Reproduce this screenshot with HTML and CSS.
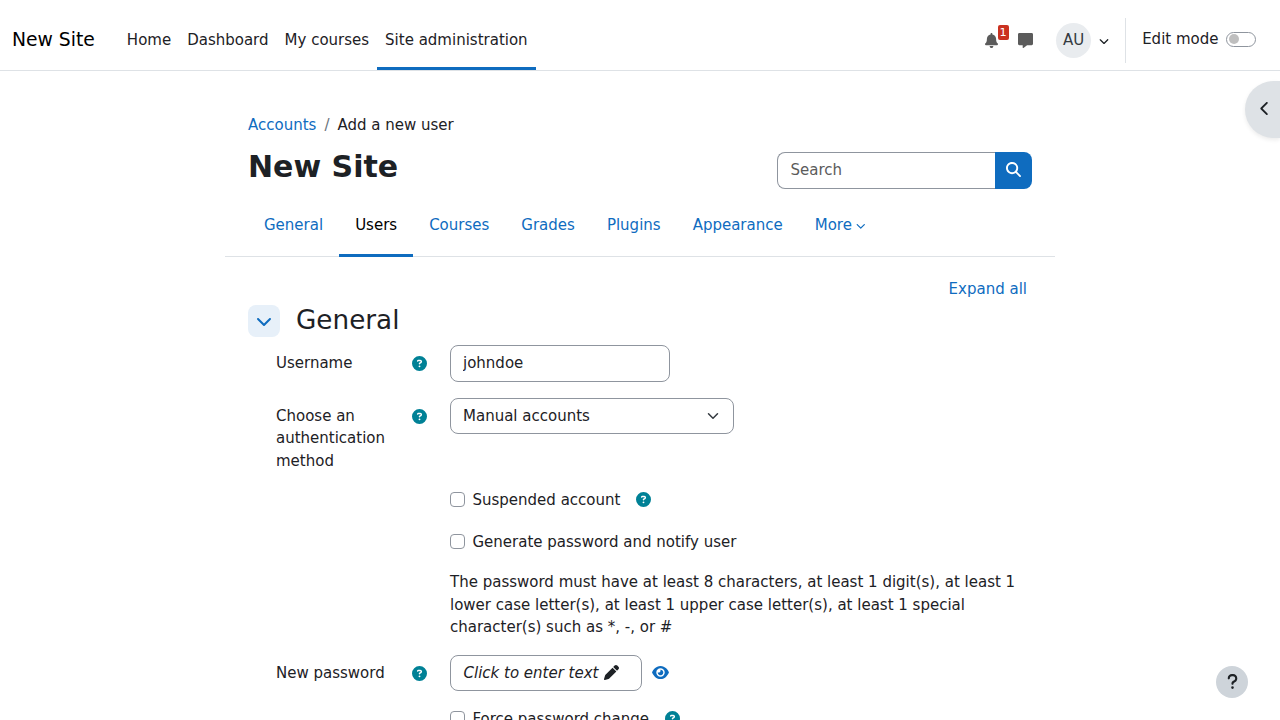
FILE: index.html
```html
<!DOCTYPE html>
<html lang="en">
<head>
<meta charset="utf-8">
<title>Add a new user</title>
<link rel="stylesheet" href="styles.css">
</head>
<body>
<svg class="sprite" aria-hidden="true">
  <symbol id="down" viewBox="0 0 512 512"><path d="M233.4 406.6c12.5 12.5 32.8 12.5 45.3 0l192-192c12.5-12.5 12.5-32.8 0-45.3s-32.8-12.5-45.3 0L256 338.7 86.6 169.4c-12.5-12.5-32.8-12.5-45.3 0s-12.5 32.8 0 45.3l192 192z"/></symbol>
  <symbol id="left" viewBox="0 0 320 512"><path d="M9.4 233.4c-12.5 12.5-12.5 32.8 0 45.3l192 192c12.5 12.5 32.8 12.5 45.3 0s12.5-32.8 0-45.3L77.3 256 246.6 86.6c12.5-12.5 12.5-32.8 0-45.3s-32.8-12.5-45.3 0l-192 192z"/></symbol>
  <symbol id="bell" viewBox="0 0 448 512"><path d="M224 0c-17.7 0-32 14.3-32 32V51.2C119 66 64 130.6 64 208v18.8c0 47-17.3 92.4-48.5 127.6l-7.4 8.3c-8.4 9.4-10.4 22.9-5.3 34.4S19.4 416 32 416H416c12.6 0 24-7.4 29.2-18.9s3.1-25-5.3-34.4l-7.4-8.3C401.3 319.2 384 273.9 384 226.8V208c0-77.4-55-142-128-156.8V32c0-17.7-14.3-32-32-32zm45.3 493.3c12-12 18.7-28.3 18.7-45.3H224 160c0 17 6.7 33.3 18.7 45.3s28.3 18.7 45.3 18.7s33.3-6.7 45.3-18.7z"/></symbol>
  <symbol id="message" viewBox="0 0 512 512"><path d="M48 0C20 0 0 20 0 48V368c0 28 20 48 48 48h112v80c0 6.1 3.4 11.6 8.8 14.3s11.9 2.1 16.8-1.5L309.3 416H464c28 0 48-20 48-48V48c0-28-20-48-48-48H48z"/></symbol>
  <symbol id="search" viewBox="0 0 512 512"><path d="M416 208c0 45.9-14.9 88.3-40 122.7L502.6 457.4c12.5 12.5 12.5 32.8 0 45.3s-32.8 12.5-45.3 0L330.7 376c-34.4 25.2-76.8 40-122.7 40C93.1 416 0 322.9 0 208S93.1 0 208 0S416 93.1 416 208zM208 352a144 144 0 1 0 0-288 144 144 0 1 0 0 288z"/></symbol>
  <symbol id="help" viewBox="0 0 512 512"><path d="M256 512A256 256 0 1 0 256 0a256 256 0 1 0 0 512zM169.8 165.3c7.9-22.3 29.1-37.3 52.8-37.3h58.3c34.9 0 63.1 28.3 63.1 63.1c0 22.6-12.1 43.5-31.7 54.8L280 264.4c-.2 13-10.9 23.6-24 23.6c-13.3 0-24-10.7-24-24V250.5c0-8.6 4.6-16.5 12.1-20.8l44.3-25.4c4.7-2.7 7.6-7.7 7.6-13.1c0-8.4-6.8-15.1-15.1-15.1H222.6c-3.4 0-6.4 2.1-7.5 5.3l-.4 1.2c-4.4 12.5-18.2 19-30.6 14.6s-19-18.2-14.6-30.6l.4-1.2zM224 352a32 32 0 1 1 64 0 32 32 0 1 1 -64 0z"/></symbol>
  <symbol id="pen" viewBox="0 0 512 512"><path d="M362.7 19.3L314.3 67.7 444.3 197.7l48.4-48.4c25-25 25-65.5 0-90.5L453.3 19.3c-25-25-65.5-25-90.5 0zm-71 71L58.6 323.5c-10.4 10.4-18 23.3-22.2 37.4L1 481.2C-1.5 489.7 .8 498.8 7 505s15.3 8.5 23.7 6.1l120.3-35.4c14.1-4.2 27-11.8 37.4-22.2L421.7 220.3 291.7 90.3z"/></symbol>
  <symbol id="eye" viewBox="0 0 576 512"><path d="M288 32c-80.8 0-145.5 36.8-192.6 80.6C48.6 156 17.3 208 2.5 243.7c-3.3 7.9-3.3 16.7 0 24.6C17.3 304 48.6 356 95.4 399.4C142.5 443.2 207.2 480 288 480s145.5-36.8 192.6-80.6c46.8-43.5 78.1-95.4 93-131.1c3.3-7.9 3.3-16.7 0-24.6c-14.9-35.7-46.2-87.7-93-131.1C433.5 68.8 368.8 32 288 32zM144 256a144 144 0 1 1 288 0 144 144 0 1 1 -288 0zm144-64c0 35.3-28.7 64-64 64c-7.1 0-13.9-1.2-20.3-3.3c-5.5-1.8-11.9 1.6-11.7 7.4c.3 6.9 1.3 13.8 3.2 20.7c13.7 51.2 66.4 81.6 117.6 67.9s81.6-66.4 67.9-117.6c-11.1-41.5-47.8-69.4-88.6-71.1c-5.8-.2-9.2 6.1-7.4 11.7c2.1 6.4 3.3 13.2 3.3 20.3z"/></symbol>
  <symbol id="question" viewBox="0 0 320 512"><path d="M80 160c0-35.3 28.7-64 64-64h32c35.3 0 64 28.7 64 64v3.6c0 21.8-11.1 42.1-29.4 53.8l-42.2 27.1c-25.2 16.2-40.4 44.1-40.4 74V320c0 17.7 14.3 32 32 32s32-14.3 32-32v-1.4c0-8.2 4.2-15.8 11-20.2l42.2-27.1c36.6-23.6 58.8-64.1 58.8-107.7V160c0-70.7-57.3-128-128-128H144C73.3 32 16 89.3 16 160c0 17.7 14.3 32 32 32s32-14.3 32-32zm80 320a40 40 0 1 0 0-80 40 40 0 1 0 0 80z"/></symbol>
</svg>

<header class="navbar">
  <a class="brand">New Site</a>
  <nav class="primary">
    <a>Home</a><a>Dashboard</a><a>My courses</a><a class="active">Site administration</a>
  </nav>
  <div class="tools">
    <span class="notify"><svg class="bell"><use href="#bell"/></svg><span class="badge">1</span></span>
    <svg class="message"><use href="#message"/></svg>
    <span class="avatar">AU</span>
    <svg class="caret"><use href="#down"/></svg>
    <div class="edit"><span>Edit mode</span><span class="switch"></span></div>
  </div>
</header>

<button class="drawer"><svg><use href="#left"/></svg></button>

<main class="page">
  <nav class="crumbs"><a>Accounts</a><span class="slash">/</span><span>Add a new user</span></nav>
  <div class="heading">
    <h1>New Site</h1>
    <form class="search"><input type="text" placeholder="Search"><button type="button"><svg><use href="#search"/></svg></button></form>
  </div>
  <nav class="tabs">
    <a>General</a><a class="active">Users</a><a>Courses</a><a>Grades</a><a>Plugins</a><a>Appearance</a><a>More<svg><use href="#down"/></svg></a>
  </nav>
  <div class="expand"><a>Expand all</a></div>
  <section>
    <div class="section-title"><span class="toggle"><svg><use href="#down"/></svg></span><h3>General</h3></div>
    <div class="row username">
      <label>Username</label><svg class="help"><use href="#help"/></svg>
      <input class="text" type="text" value="johndoe">
    </div>
    <div class="row auth">
      <label>Choose an authentication method</label><svg class="help"><use href="#help"/></svg>
      <div class="select"><span>Manual accounts</span><svg viewBox="0 0 16 16"><path d="m2 5 6 6 6-6"/></svg></div>
    </div>
    <div class="check suspended"><span class="box"></span><span class="name">Suspended account</span><svg class="help"><use href="#help"/></svg></div>
    <div class="check generate"><span class="box"></span><span class="name">Generate password and notify user</span></div>
    <p class="policy">The password must have at least 8 characters, at least 1 digit(s), at least 1 lower case letter(s), at least 1 upper case letter(s), at least 1 special character(s) such as *, -, or #</p>
    <div class="row password">
      <label>New password</label><svg class="help"><use href="#help"/></svg>
      <div class="reveal"><span class="enter"><em>Click to enter text</em><svg><use href="#pen"/></svg></span><svg class="eye"><use href="#eye"/></svg></div>
    </div>
    <div class="check force"><span class="box"></span><span class="name">Force password change</span><svg class="help"><use href="#help"/></svg></div>
  </section>
</main>

<button class="footer-help"><svg><use href="#question"/></svg></button>
</body>
</html>
```
FILE: styles.css
```css
* { box-sizing: border-box; }
html, body { height: 100%; overflow: hidden; }
body { margin: 0; background: #fff; color: #1d2125; font: 15px/22.5px "DejaVu Sans", sans-serif; }
svg { display: block; fill: currentColor; flex: none; }
.sprite { position: absolute; width: 0; height: 0; }
a { color: #0f6cbf; }
button { border: 0; padding: 0; display: flex; align-items: center; justify-content: center; }
input { font: inherit; color: inherit; outline: none; }

.navbar { height: 71px; display: flex; border-bottom: 1px solid #dee2e6; padding: 0 24px 0 12px; }
.brand { color: #000; font-size: 18.75px; line-height: 28px; padding-top: 26px; margin-right: 24px; }
.primary { display: flex; }
.primary a { height: 70px; padding: 29px 8px 0; border-bottom: 3px solid transparent; color: #1d2125; }
.primary a.active { border-color: #0f6cbf; }
.tools { display: flex; align-items: center; margin-left: auto; height: 80px; color: #1d2125; }
.notify { position: relative; color: #5b5b5b; margin-right: 20px; }
.bell { width: 13px; height: 15px; }
.badge { position: absolute; left: 13px; top: -8px; width: 11px; height: 15px; border-radius: 2px; background: #ca3120; color: #fff; font-size: 11.25px; line-height: 15px; text-align: center; }
.message { width: 15px; height: 15px; color: #5b5b5b; margin-right: 23px; }
.avatar { width: 35px; height: 35px; border-radius: 50%; background: #e9ecef; color: #343a40; display: flex; align-items: center; justify-content: center; padding-left: 1px; }
.caret { width: 10px; height: 10px; margin: 1px 16px 0 8px; }
.edit { display: flex; align-items: center; height: 45px; padding-left: 16.5px; border-left: 1px solid #dee2e6; gap: 7.5px; padding-bottom: 2px; }
.switch { width: 30px; height: 15px; border: 1px solid #8f959e; border-radius: 8px; display: flex; align-items: center; padding-left: 2px; }
.switch::before { content: ""; width: 10px; height: 10px; border-radius: 50%; background: #bfbfbf; }

.drawer { position: absolute; right: 0; top: 81px; width: 35px; height: 57px; border-radius: 28.5px 0 0 28.5px; background: #dee2e6; box-shadow: 0 2px 4px rgba(0,0,0,.08); color: #1d2125; padding: 0 0 3px 4px; }
.drawer svg { width: 10px; height: 15px; }

.page { width: 830px; margin: 0 auto; padding: 43px 23px 0; }
.crumbs { display: flex; gap: 8px; }
.slash { color: #6a737b; }
.heading { display: flex; justify-content: space-between; padding-top: 15px; height: 52px; }
h1 { font-size: 30px; line-height: 36px; margin: -3px 0 0; }
.search { display: flex; height: 37px; width: 255px; }
.search input { width: 218px; height: 37px; border: 1px solid #8f959e; border-right: 0; border-radius: 8px 0 0 8px; padding: 0 12px 1px 12.5px; }
.search input::placeholder { color: #5b5b5b; opacity: 1; }
.search button { width: 37px; height: 37px; background: #0f6cbf; border-radius: 0 8px 8px 0; color: #fff; padding-bottom: 2px; }
.search svg { width: 15px; height: 15px; }
.tabs { display: flex; margin: 0 -23px; padding-left: 23px; height: 68px; border-bottom: 1px solid #dee2e6; }
.tabs a { padding: 25px 16px 0; height: 68px; border-bottom: 3px solid transparent; display: flex; }
.tabs a.active { color: #000; border-color: #0f6cbf; }
.tabs svg { width: 9.5px; height: 9.5px; margin: 7px 0 0 4px; }
.expand { text-align: right; padding: 21px 5px 0 0; }
.section-title { display: flex; margin-top: 4px; height: 41px; gap: 16px; }
.toggle { width: 32px; height: 32px; background: #e7f0f9; border-radius: 8px; color: #0f6cbf; display: flex; align-items: center; justify-content: center; margin-top: 1px; }
.toggle svg { width: 16px; height: 16px; }
h3 { font-weight: 400; font-size: 26.25px; line-height: 31.5px; margin: 1px 0 0; }
.row { display: grid; grid-template-columns: 136px 38px 1fr; margin-left: 28px; align-items: start; }
.row label { padding-top: 6.75px; padding-right: 20px; }
.help { width: 15px; height: 15px; color: #008196; }
.row .help { margin-top: 11px; }
.username { height: 53px; }
.text { width: 220px; height: 37px; border: 1px solid #8f959e; border-radius: 8px; padding: 0 12px 1px; }
.auth { height: 90px; }
.select { width: 284px; height: 36px; border: 1px solid #8f959e; border-radius: 8px; padding: 0 14px 0 12px; display: flex; align-items: center; justify-content: space-between; }
.select svg { width: 12px; height: 12px; fill: none; stroke: #343a40; stroke-width: 2; stroke-linecap: round; stroke-linejoin: round; }
.check { display: flex; align-items: center; margin-left: 202px; height: 23px; }
.name { padding-top: 1px; }
.box { width: 15px; height: 15px; border: 1px solid #8f959e; border-radius: 4px; margin-right: 7.5px; }
.check .help { margin-left: 15.5px; }
.generate { margin-top: 19px; }
.policy { margin: 18px 0 0 202px; width: 582px; }
.password { margin-top: 16px; height: 52px; }
.password label { padding-top: 7.5px; }
.force .name { padding-top: 2px; }
.reveal { display: flex; align-items: center; }
.enter { width: 192px; height: 36px; border: 1px solid #8f959e; border-radius: 8px; padding: 1px 0 0 12.5px; display: flex; align-items: center; gap: 5px; }
.enter svg { width: 15px; height: 15px; margin-bottom: 1px; }
.eye { width: 17px; height: 15px; color: #0f6cbf; margin-left: 10px; margin-bottom: 1px; }

.footer-help { position: absolute; right: 32px; bottom: 22px; width: 32px; height: 32px; border-radius: 50%; background: #ced4da; color: #1d2125; padding-bottom: 2px; }
.footer-help svg { width: 11px; height: 17px; }
```
